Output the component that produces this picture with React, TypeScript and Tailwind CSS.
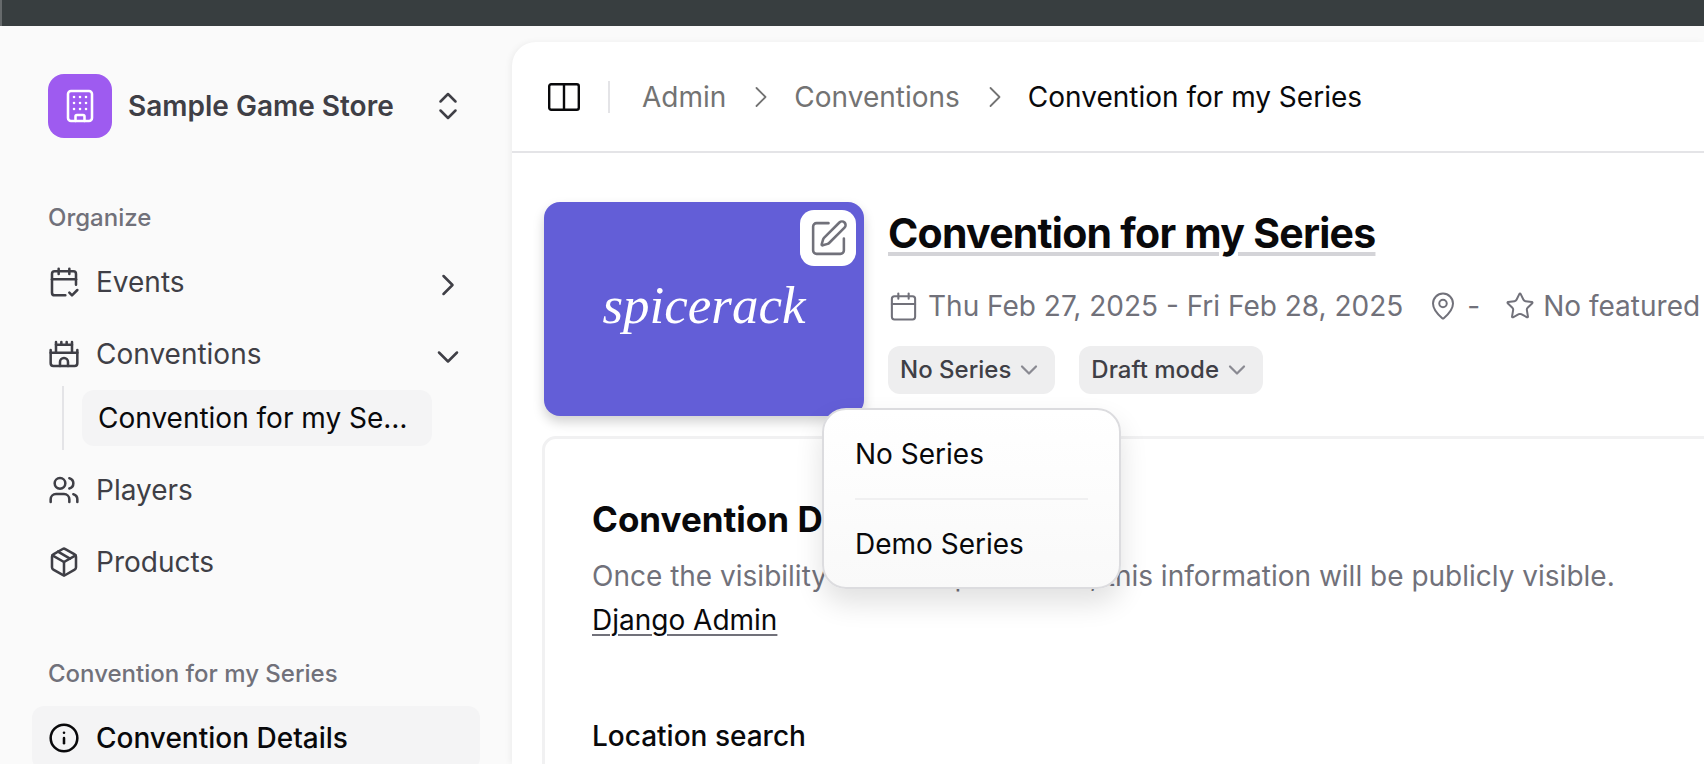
import { Building, Calendar, CalendarCheck2, Castle, ChevronDown, ChevronRight, ChevronsUpDown, Info, MapPin, Package, SquarePen, Star, Users } from "lucide-react";

export default function App() {
  return (
    <div className="h-screen w-full overflow-hidden flex flex-col bg-[#fafafa] font-['Inter',sans-serif]">
      <div className="h-[26px] shrink-0 bg-[#383e40] border-l-2 border-[#666a6c]"></div>

      <div className="flex flex-1 min-h-0">
        <aside className="w-[512px] shrink-0 pl-[32px] pr-[32px] pt-[48px] text-[#3f3f46]">
          <div className="flex items-center pl-[16px]">
            <div className="w-[64px] h-[64px] rounded-[16px] bg-[#9e5bf0] flex items-center justify-center">
              <Building size={36} color="#ffffff" strokeWidth={1.7} />
            </div>
            <span className="ml-[16px] text-[28px] font-semibold leading-none">Sample Game Store</span>
            <ChevronsUpDown size={36} strokeWidth={1.7} className="ml-[36px]" />
          </div>

          <div className="pl-[16px] mt-[63px] text-[24px] leading-[34px] font-medium text-[#71717a]">Organize</div>

          <div className="mt-[19px] flex items-center h-[56px] pl-[16px] text-[28px]">
            <CalendarCheck2 size={32} strokeWidth={1.9} />
            <span className="ml-[16px]">Events</span>
            <ChevronRight size={36} strokeWidth={1.7} className="ml-auto mr-[14px] mt-[6px]" />
          </div>
          <div className="mt-[16px] flex items-center h-[56px] pl-[16px] text-[28px]">
            <Castle size={32} strokeWidth={1.9} />
            <span className="ml-[16px]">Conventions</span>
            <ChevronDown size={36} strokeWidth={1.7} className="ml-auto mr-[14px] mt-[6px]" />
          </div>
          <div className="ml-[30px] mt-[4px] h-[64px] border-l-2 border-[#e4e4e7] pl-[18px] flex items-center">
            <div className="w-[350px] h-[56px] rounded-[12px] bg-[#f4f4f5] px-[16px] flex items-center text-[28px] text-[#09090b]">
              <span className="block truncate w-[312px]">Convention for my Series</span>
            </div>
          </div>
          <div className="mt-[12px] flex items-center h-[56px] pl-[16px] text-[28px]">
            <Users size={32} strokeWidth={1.9} />
            <span className="ml-[16px]">Players</span>
          </div>
          <div className="mt-[16px] flex items-center h-[56px] pl-[16px] text-[28px]">
            <Package size={32} strokeWidth={1.9} />
            <span className="ml-[16px]">Products</span>
          </div>

          <div className="pl-[16px] mt-[67px] text-[24px] leading-[34px] font-medium text-[#71717a]">Convention for my Series</div>

          <div className="mt-[15px] flex items-center h-[64px] pl-[16px] rounded-[12px] bg-[#f4f4f5] text-[28px] font-medium text-[#09090b]">
            <Info size={32} strokeWidth={1.9} />
            <span className="ml-[16px]">Convention Details</span>
          </div>
        </aside>

        <main className="flex-1 min-w-0 mt-[16px] bg-white rounded-tl-[24px] shadow-[-2px_0_6px_rgba(0,0,0,0.05)] overflow-hidden">
          <header className="h-[111px] border-b-2 border-[#e4e4e7] flex items-center pl-[36px] pt-[1px]">
            <svg width="32" height="28" viewBox="0 0 32 28" fill="none" stroke="#09090b" strokeWidth="2.4" strokeLinejoin="round">
              <rect x="1.2" y="1.2" width="29.6" height="25.6" rx="2" />
              <path d="M16 1.2v25.6" />
            </svg>
            <div className="ml-[28px] w-[2px] h-[32px] bg-[#e4e4e7]"></div>
            <nav className="ml-[32px] flex items-center text-[28px] text-[#737373]">
              <span>Admin</span>
              <ChevronRight size={36} strokeWidth={1.2} className="ml-[17px]" />
              <span className="ml-[15px]">Conventions</span>
              <ChevronRight size={36} strokeWidth={1.2} className="ml-[17px]" />
              <span className="ml-[15px] text-[#09090b]">Convention for my Series</span>
            </nav>
          </header>

          <div className="pl-[32px] pt-[49px]">
            <div className="flex">
              <div className="relative w-[320px] h-[214px] shrink-0 rounded-[16px] bg-[#635ed7] shadow-[0_6px_12px_rgba(0,0,0,0.18)] flex items-center justify-center">
                <span className="font-['Liberation_Serif',serif] italic text-white text-[53px] leading-none -mt-[8px]">spicerack</span>
                <div className="absolute right-[8px] top-[8px] w-[56px] h-[56px] rounded-[14px] bg-white flex items-center justify-center">
                  <SquarePen size={41} color="#71717a" strokeWidth={1.5} />
                </div>
              </div>

              <div className="ml-[24px] min-w-0">
                <h1 className="mt-[1px] text-[41px] leading-[60px] font-bold tracking-[-0.75px] text-[#09090b] whitespace-nowrap underline decoration-[#d4d4d8] decoration-[4px] underline-offset-[4px]">Convention for my Series</h1>
                <div className="mt-[25px] flex items-center text-[28px] leading-[36px] text-[#71717a] whitespace-nowrap">
                  <Calendar size={31} strokeWidth={1.6} />
                  <span className="ml-[9px]">Thu Feb 27, 2025 - Fri Feb 28, 2025</span>
                  <MapPin size={30} strokeWidth={1.6} className="ml-[25px]" />
                  <span className="ml-[9px]">-</span>
                  <Star size={30} strokeWidth={1.6} className="ml-[25px]" />
                  <span className="ml-[8px]">No featured</span>
                </div>
                <div className="mt-[22px] flex items-center gap-[24px]">
                  <div className="relative">
                    <div className="h-[48px] pl-[12px] pr-[12px] rounded-[12px] bg-[#eeeeef] flex items-center text-[24px] font-medium text-[#3f3f46]">
                      <span>No Series</span>
                      <ChevronDown size={28} strokeWidth={1.9} color="#8a8a92" className="ml-[4px]" />
                    </div>
                    <div className="absolute z-10 left-[-66px] top-[62px] w-[299px] h-[181px] rounded-[24px] border-2 border-[#dcdcdf] bg-gradient-to-b from-white to-[#f9f9f9] shadow-[0_14px_28px_rgba(0,0,0,0.12)] px-[31px] text-[28px] text-[#09090b]">
                      <div className="h-[88px] flex items-center">No Series</div>
                      <div className="h-[2px] bg-[#f0f0f1]"></div>
                      <div className="h-[87px] flex items-center">Demo Series</div>
                    </div>
                  </div>
                  <div className="h-[48px] pl-[12px] pr-[12px] rounded-[12px] bg-[#eeeeef] flex items-center text-[24px] font-medium text-[#3f3f46]">
                    <span>Draft mode</span>
                    <ChevronDown size={28} strokeWidth={1.9} color="#8a8a92" className="ml-[4px]" />
                  </div>
                </div>
              </div>
            </div>

            <section className="mt-[20px] -ml-[2px] w-[1400px] h-[500px] rounded-[14px] border-[3px] border-[#f1f1f2] pl-[47px] pt-[56px]">
              <h2 className="text-[35px] leading-[48px] font-bold text-[#09090b]">Convention Details</h2>
              <p className="mt-[11px] text-[28px] leading-[44px] text-[#71717a]">Once the visibility is set to 'published', this information will be publicly visible.</p>
              <a className="block w-fit text-[28px] leading-[44px] text-[#09090b] underline decoration-[#71717a] decoration-2 underline-offset-[4px]">Django Admin</a>
              <div className="mt-[72px] text-[28px] leading-[44px] font-medium text-[#09090b]">Location search</div>
            </section>
          </div>
        </main>
      </div>
    </div>
  );
}
